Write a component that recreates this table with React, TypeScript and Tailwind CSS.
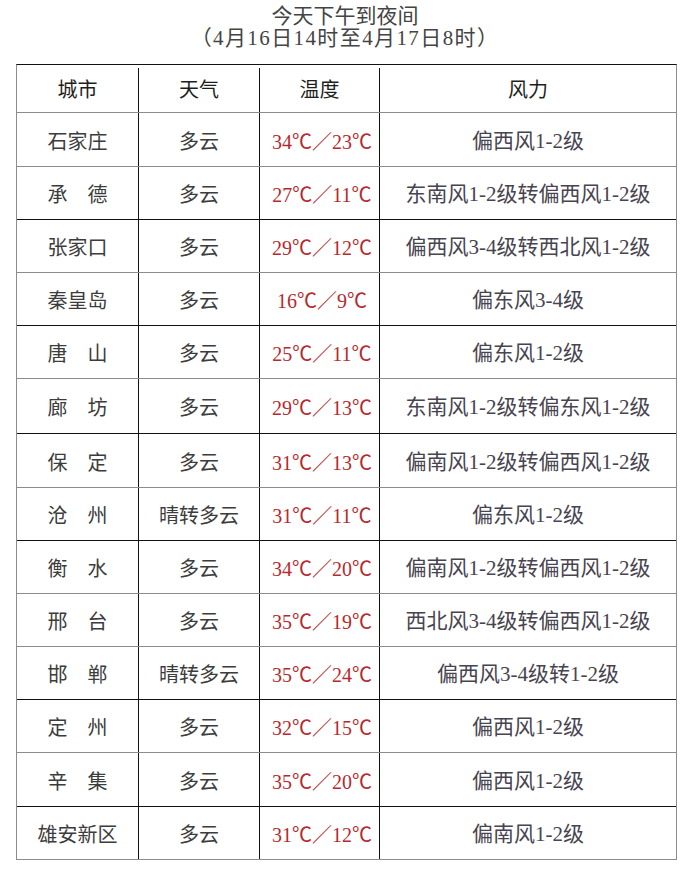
const rows = [
  { city: "石家庄", weather: "多云", temp: "34℃／23℃", wind: "偏西风1-2级", h: "h-[54px]", line: "border-b-[#8c8c8c]" },
  { city: "承　德", weather: "多云", temp: "27℃／11℃", wind: "东南风1-2级转偏西风1-2级", h: "h-[53px]", line: "border-b-[#111]" },
  { city: "张家口", weather: "多云", temp: "29℃／12℃", wind: "偏西风3-4级转西北风1-2级", h: "h-[53px]", line: "border-b-[#8c8c8c]" },
  { city: "秦皇岛", weather: "多云", temp: "16℃／9℃", wind: "偏东风3-4级", h: "h-[53px]", line: "border-b-[#111]" },
  { city: "唐　山", weather: "多云", temp: "25℃／11℃", wind: "偏东风1-2级", h: "h-[53px]", line: "border-b-[#8c8c8c]" },
  { city: "廊　坊", weather: "多云", temp: "29℃／13℃", wind: "东南风1-2级转偏东风1-2级", h: "h-[55px]", line: "border-b-[#111]" },
  { city: "保　定", weather: "多云", temp: "31℃／13℃", wind: "偏南风1-2级转偏西风1-2级", h: "h-[54px]", line: "border-b-[#8c8c8c]" },
  { city: "沧　州", weather: "晴转多云", temp: "31℃／11℃", wind: "偏东风1-2级", h: "h-[53px]", line: "border-b-[#111]" },
  { city: "衡　水", weather: "多云", temp: "34℃／20℃", wind: "偏南风1-2级转偏西风1-2级", h: "h-[53px]", line: "border-b-[#8c8c8c]" },
  { city: "邢　台", weather: "多云", temp: "35℃／19℃", wind: "西北风3-4级转偏西风1-2级", h: "h-[53px]", line: "border-b-[#8c8c8c]" },
  { city: "邯　郸", weather: "晴转多云", temp: "35℃／24℃", wind: "偏西风3-4级转1-2级", h: "h-[53px]", line: "border-b-[#111]" },
  { city: "定　州", weather: "多云", temp: "32℃／15℃", wind: "偏西风1-2级", h: "h-[53px]", line: "border-b-[#8c8c8c]" },
  { city: "辛　集", weather: "多云", temp: "35℃／20℃", wind: "偏西风1-2级", h: "h-[54px]", line: "border-b-[#111]" },
  { city: "雄安新区", weather: "多云", temp: "31℃／12℃", wind: "偏南风1-2级", h: "h-[53px]", line: "border-b-[#8c8c8c]" },
];

const font = "font-['Liberation_Serif','Noto_Sans_CJK_SC',serif]";

export default function App() {
  return (
    <div className={`w-[690px] h-[892px] bg-white ${font} text-[#3c3c3c]`}>
      <div className="pt-[5px] text-center text-[21px] leading-[22px] text-[#444]">
        <div>今天下午到夜间</div>
        <div className="tracking-[1.4px]">（4月16日14时至4月17日8时）</div>
      </div>

      <div className="mt-[15px] ml-[16px] w-[661px] border-t border-t-[#111] border-x border-x-[#8c8c8c]">
        <div className="flex h-[48px] border-b border-b-[#8c8c8c] pt-[3px] text-[20px] text-[#1e1e1e]">
          <div className="w-[121px] flex items-center justify-center">城市</div>
          <div className="w-[121px] flex items-center justify-center border-l border-l-[#111]">天气</div>
          <div className="w-[120px] flex items-center justify-center border-l border-l-[#111]">温度</div>
          <div className="flex-1 flex items-center justify-center border-l border-l-[#111]">风力</div>
        </div>

        {rows.map((r) => (
          <div key={r.city} className={`flex ${r.h} border-b ${r.line} text-[20px]`}>
            <div className="w-[121px] flex items-center justify-center pt-[4px]">{r.city}</div>
            <div className="w-[121px] flex items-center justify-center border-l border-l-[#111] pt-[4px]">{r.weather}</div>
            <div className="w-[120px] flex items-center justify-center border-l border-l-[#111] pt-[4px] pl-[5px] text-[#b52a2e]">{r.temp}</div>
            <div className="flex-1 flex items-center justify-center border-l border-l-[#111] pt-[4px] text-[21px] text-[#474450]">{r.wind}</div>
          </div>
        ))}
      </div>
    </div>
  );
}
